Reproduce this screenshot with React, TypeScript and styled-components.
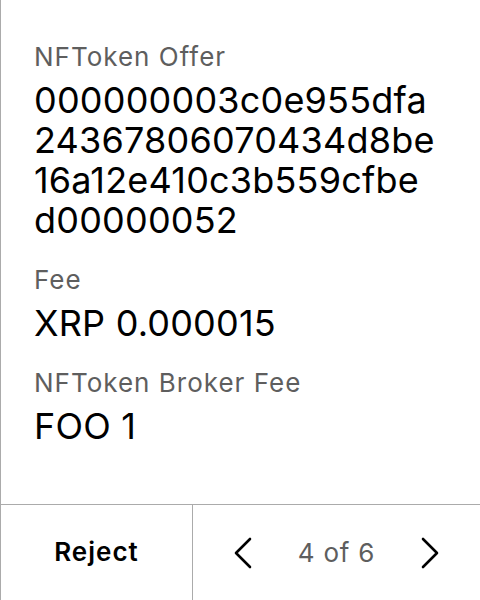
import React from "react";
import styled, { createGlobalStyle } from "styled-components";

const Global = createGlobalStyle`
  html, body { margin: 0; padding: 0; background: #fff; }
  body { font-family: Inter, "Noto Sans", sans-serif; }
`;

const Screen = styled.div`
  width: 480px;
  height: 600px;
  box-sizing: border-box;
  border-left: 1px solid #ababab;
  display: flex;
  flex-direction: column;
  background: #fff;
`;

const Content = styled.div`
  flex: 1;
  padding: 41px 24px 0 33px;
  display: flex;
  flex-direction: column;
`;

const Field = styled.div`
  display: flex;
  flex-direction: column;
  margin-bottom: 24px;
`;

const Label = styled.div`
  font-size: 26px;
  line-height: 32px;
  letter-spacing: 1px;
  color: #5e5e5e;
  margin-bottom: 7px;
`;

const Value = styled.div`
  font-size: 36px;
  line-height: 40px;
  letter-spacing: 0.2px;
  color: #000;
  word-break: break-all;
`;

const Footer = styled.div`
  height: 96px;
  box-sizing: border-box;
  border-top: 1px solid #ababab;
  display: flex;
`;

const RejectButton = styled.button`
  width: 192px;
  border: none;
  border-right: 1px solid #ababab;
  background: transparent;
  font-family: Inter, sans-serif;
  font-size: 26px;
  font-weight: 600;
  letter-spacing: 1px;
  color: #000;
  padding: 0 0 2px 0;
`;

const Pager = styled.div`
  flex: 1;
  display: flex;
  align-items: center;
  justify-content: center;
  gap: 45px;
`;

const Count = styled.span`
  font-size: 26px;
  letter-spacing: 0.8px;
  color: #5e5e5e;
`;

const NavButton = styled.button`
  border: none;
  background: transparent;
  padding: 0;
  width: 20px;
  height: 36px;
  display: flex;
  align-items: center;
  justify-content: center;
`;

const Chevron = ({ dir }: { dir: "left" | "right" }) => (
  <svg width="20" height="32" viewBox="0 0 20 32" fill="none">
    <path
      d={dir === "left" ? "M17 2 L3 16 L17 30" : "M3 2 L17 16 L3 30"}
      stroke="#000"
      strokeWidth="2.6"
      strokeLinecap="round"
      strokeLinejoin="round"
    />
  </svg>
);

const fields = [
  {
    label: "NFToken Offer",
    lines: [
      "000000003c0e955dfa",
      "24367806070434d8be",
      "16a12e410c3b559cfbe",
      "d00000052",
    ],
  },
  { label: "Fee", lines: ["XRP 0.000015"] },
  { label: "NFToken Broker Fee", lines: ["FOO 1"] },
];

export default function App() {
  return (
    <>
      <Global />
      <Screen>
        <Content>
          {fields.map((f) => (
            <Field key={f.label}>
              <Label>{f.label}</Label>
              <Value>
                {f.lines.map((l, i) => (
                  <div key={i}>{l}</div>
                ))}
              </Value>
            </Field>
          ))}
        </Content>
        <Footer>
          <RejectButton>Reject</RejectButton>
          <Pager>
            <NavButton aria-label="Previous">
              <Chevron dir="left" />
            </NavButton>
            <Count>4 of 6</Count>
            <NavButton aria-label="Next">
              <Chevron dir="right" />
            </NavButton>
          </Pager>
        </Footer>
      </Screen>
    </>
  );
}
